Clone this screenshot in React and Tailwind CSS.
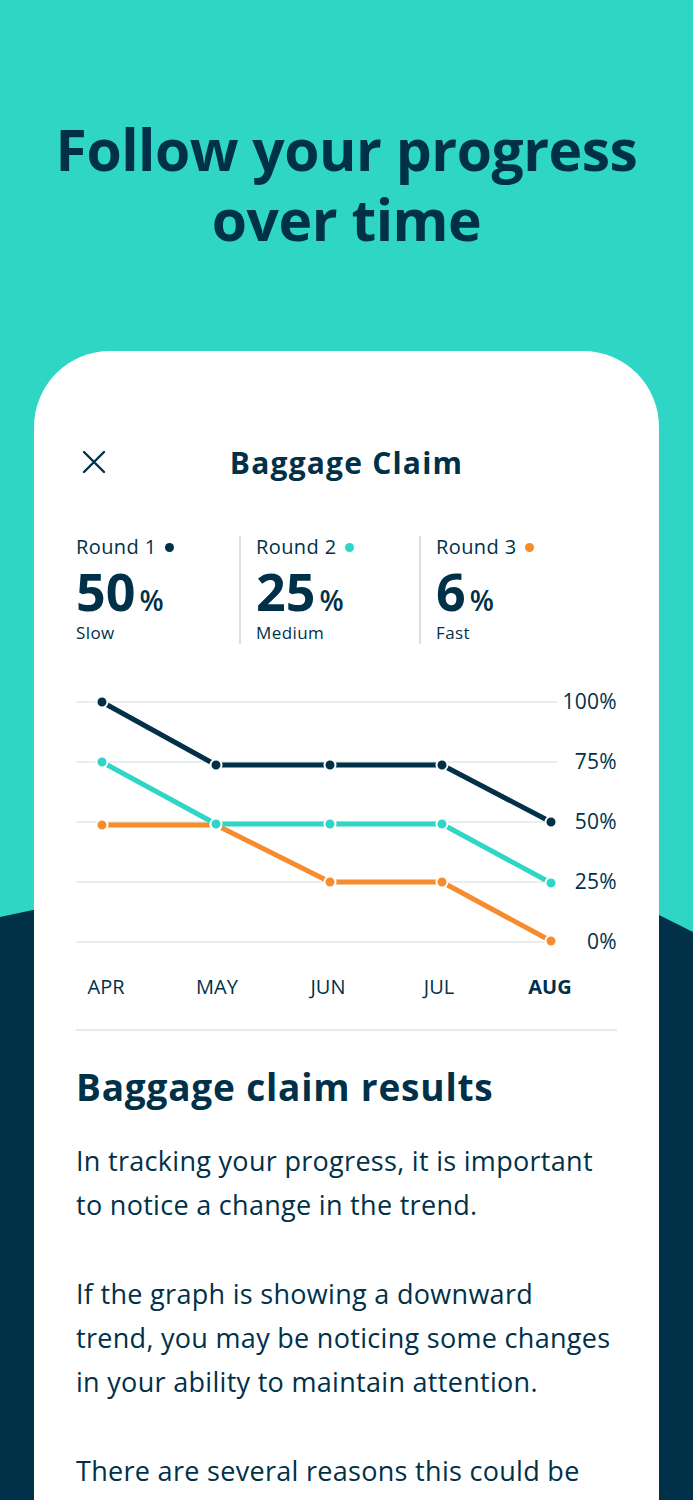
import React from 'react'

const NAVY = '#003149'
const TEAL = '#2fd6c6'
const ORANGE = '#f68c2e'

const xs = [26, 140, 254, 366, 475]
const grid = [12, 72, 132, 192, 252]

const series = [
  { color: ORANGE, ys: [135, 135, 192, 192, 251] },
  { color: TEAL, ys: [72, 134, 134, 134, 193] },
  { color: NAVY, ys: [12, 75, 75, 75, 132] },
]

const rounds = [
  { label: 'Round 1', dot: 'bg-[#003149]', value: '50', speed: 'Slow' },
  { label: 'Round 2', dot: 'bg-[#2fd6c6]', value: '25', speed: 'Medium' },
  { label: 'Round 3', dot: 'bg-[#f68c2e]', value: '6', speed: 'Fast' },
]

const months = ['APR', 'MAY', 'JUN', 'JUL', 'AUG']

const Chart = () => (
  <div className="mt-[46px] flex flex-row h-[264px]">
    <svg width="483" height="264" viewBox="0 0 483 264" className="shrink-0">
      {grid.map(y => (
        <line key={y} x1="0" x2="481" y1={y} y2={y} stroke="#e4e9ea" strokeWidth="1.5" />
      ))}
      {series.map((s, i) => (
        <g key={i}>
          <polyline
            points={xs.map((x, j) => `${x},${s.ys[j]}`).join(' ')}
            fill="none"
            stroke={s.color}
            strokeWidth="5"
            strokeLinejoin="round"
          />
          {xs.map((x, j) => (
            <circle key={j} cx={x} cy={s.ys[j]} r="5.5" fill={s.color} stroke="#fff" strokeWidth="2" />
          ))}
        </g>
      ))}
    </svg>
    <div className="flex flex-1 flex-col h-[264px] -mt-[18px]">
      {['100%', '75%', '50%', '25%', '0%'].map(l => (
        <div key={l} className="h-[60px] shrink-0 flex items-center justify-end text-[21px] tracking-[0.3px]">{l}</div>
      ))}
    </div>
  </div>
)

export default function App() {
  return (
    <div className="relative h-[1500px] overflow-hidden bg-[#2fd6c6] text-[#003149] [font-family:'Open_Sans',sans-serif]">
      <div className="absolute inset-0 bg-[#003149] [clip-path:polygon(0_917px,33px_910px,200px_885px,500px_880px,659px_915px,693px_932px,693px_1500px,0_1500px)]"></div>

      <div className="relative flex flex-col">
        <h1 className="pt-[114px] text-center text-[57px] font-bold leading-[70px] tracking-[-0.5px]">
          Follow your progress<br />over time
        </h1>

        <div className="mx-[34px] mt-[97px] rounded-t-[76px] bg-white px-[42px] pt-[91px]">
          <div className="flex flex-row items-center h-[40px]">
            <div className="w-[36px] flex justify-center">
              <svg width="24" height="24" viewBox="0 0 24 24" fill="none" stroke="#003149" strokeWidth="2.4" strokeLinecap="round">
                <path d="M2 2 L22 22 M22 2 L2 22" />
              </svg>
            </div>
            <h2 className="flex-1 text-center text-[30px] font-bold tracking-[1.2px]">Baggage Claim</h2>
            <div className="w-[36px]"></div>
          </div>

          <div className="mt-[54px] flex flex-row">
            {rounds.map((r, i) => (
              <div key={r.label} className={i === 0 ? 'w-[163px]' : 'w-[180px] border-l-2 border-[#d9dfe2] pl-[15px]'}>
                <div className="flex flex-row items-center gap-[8px] text-[20px] leading-[22px] tracking-[0.4px]">
                  {r.label}
                  <span className={`inline-block h-[9px] w-[9px] rounded-full ${r.dot}`}></span>
                </div>
                <div className="mt-[10px] flex h-[46px] flex-row items-baseline">
                  <span className="text-[52px] font-bold leading-[46px]">{r.value}</span>
                  <span className="ml-[4px] text-[28px] font-semibold leading-none">%</span>
                </div>
                <div className="mt-[8px] text-[17px] leading-[22px] tracking-[0.4px]">{r.speed}</div>
              </div>
            ))}
          </div>

          <Chart />

          <div className="mt-[22px] flex flex-row gap-[51px] text-[20px] leading-[22px]">
            {months.map(m => (
              <div key={m} className={`w-[60px] text-center ${m === 'AUG' ? 'font-bold' : ''}`}>{m}</div>
            ))}
          </div>

          <div className="mt-[31px] h-[2px] bg-[#e4e9ea]"></div>

          <h3 className="mt-[36px] text-[37px] font-bold leading-[40px] tracking-[0.8px]">Baggage claim results</h3>

          <div className="mt-[32px] text-[27px] leading-[44px] tracking-[0.3px]">
            <p className="mb-[45px]">In tracking your progress, it is important to notice a change in the trend.</p>
            <p className="mb-[45px]">If the graph is showing a downward trend, you may be noticing some changes in your ability to maintain attention.</p>
            <p>There are several reasons this could be happening, and it is worth talking to someone about it.</p>
          </div>
        </div>
      </div>
    </div>
  )
}
